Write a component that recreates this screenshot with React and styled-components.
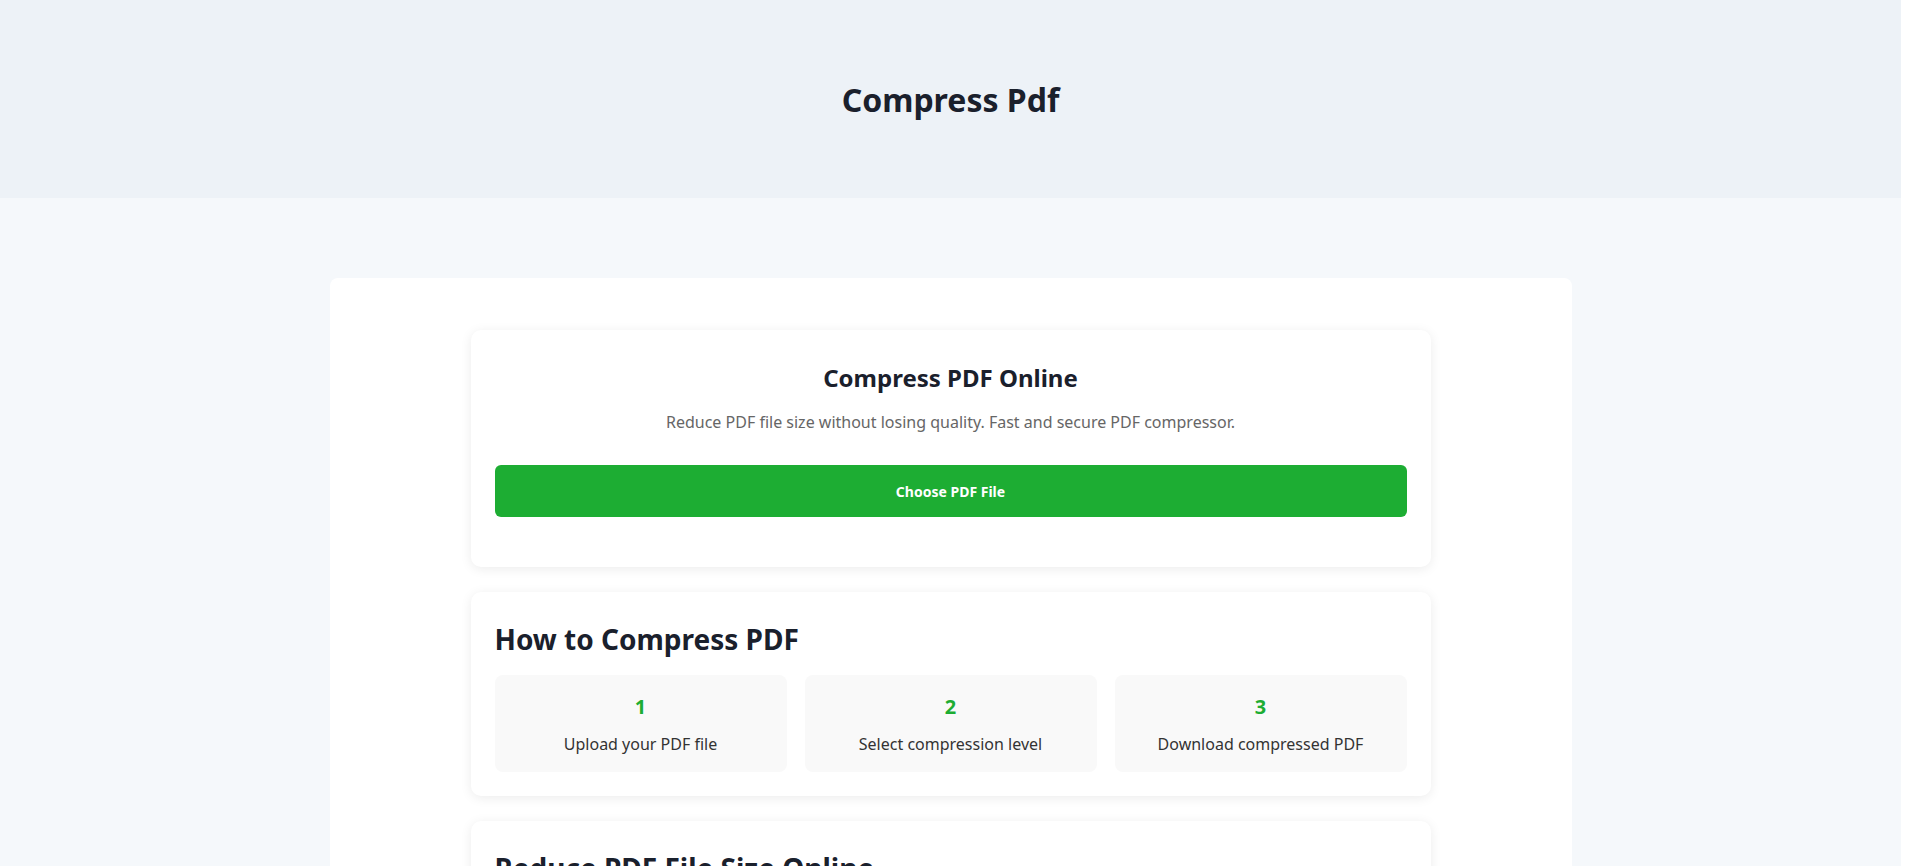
import React from 'react';
import styled, { createGlobalStyle } from 'styled-components';

const GlobalStyle = createGlobalStyle`
  * {
    box-sizing: border-box;
  }
  html {
    background: #ffffff;
  }
  body {
    margin: 0 9px 0 0;
    background: #f5f8fb;
    font-family: 'Noto Sans', 'Open Sans', sans-serif;
    color: #1a202c;
  }
`;

const steps = [
  { id: 1, text: 'Upload your PDF file' },
  { id: 2, text: 'Select compression level' },
  { id: 3, text: 'Download compressed PDF' },
];

const App = () => {
  return (
    <>
      <GlobalStyle />
      <Header>
        <PageTitle>Compress Pdf</PageTitle>
      </Header>

      <Main>
        <Container>
          <Card centered>
            <ToolTitle>Compress PDF Online</ToolTitle>
            <ToolText>
              Reduce PDF file size without losing quality. Fast and secure PDF
              compressor.
            </ToolText>
            <UploadButton type='button'>Choose PDF File</UploadButton>
          </Card>

          <Card>
            <SectionTitle>How to Compress PDF</SectionTitle>
            <StepGrid>
              {steps.map((step) => (
                <StepBox key={step.id}>
                  <StepNumber>{step.id}</StepNumber>
                  <StepText>{step.text}</StepText>
                </StepBox>
              ))}
            </StepGrid>
          </Card>

          <Card>
            <SectionTitle>Reduce PDF File Size Online</SectionTitle>
            <Paragraph>
              Large PDF files are hard to share by email and slow to upload.
              Our compressor shrinks your documents while keeping text sharp
              and images clear, so they are ready to send in seconds.
            </Paragraph>
            <Paragraph>
              Everything runs in your browser. Your files are never stored and
              are removed as soon as the compression is finished.
            </Paragraph>
          </Card>

          <Card>
            <SectionTitle>Why Use Our PDF Compressor</SectionTitle>
            <FeatureList>
              <li>Free to use with no sign-up required</li>
              <li>Keeps the original layout and fonts</li>
              <li>Works on Windows, Mac, Linux and mobile</li>
              <li>Secure processing with automatic file deletion</li>
            </FeatureList>
          </Card>

          <Card>
            <SectionTitle>Frequently Asked Questions</SectionTitle>
            <Question>Is it safe to compress PDF files online?</Question>
            <Paragraph>
              Yes. Files are processed securely and deleted right after you
              download the result.
            </Paragraph>
            <Question>Will compression reduce the quality?</Question>
            <Paragraph>
              The compressor balances size and quality, so most documents look
              the same as the original.
            </Paragraph>
          </Card>
        </Container>
      </Main>
    </>
  );
};

const Header = styled.header`
  background: #edf2f7;
  height: 198px;
  display: flex;
  align-items: center;
  justify-content: center;
`;

const PageTitle = styled.h1`
  margin: 0;
  font-size: 32px;
  font-weight: 700;
  color: #1a202c;
`;

const Main = styled.main`
  padding: 80px 0 90px;
`;

const Container = styled.div`
  width: 1242px;
  margin: 0 auto;
  background: #ffffff;
  border-radius: 8px;
  padding: 52px 0 40px;
  display: flex;
  flex-direction: column;
  align-items: center;
  gap: 25px;
`;

const Card = styled.section`
  width: 960px;
  background: #ffffff;
  border-radius: 10px;
  box-shadow: 0 2px 12px rgba(0, 0, 0, 0.08);
  padding: 24px;
  text-align: ${(props) => (props.centered ? 'center' : 'left')};
`;

const ToolTitle = styled.h2`
  margin: 8px 0 0;
  font-size: 24px;
  line-height: 32px;
  font-weight: 700;
  color: #1a202c;
`;

const ToolText = styled.p`
  margin: 16px 0 31px;
  font-size: 16px;
  line-height: 24px;
  color: #666666;
`;

const UploadButton = styled.button`
  display: block;
  width: 100%;
  height: 52px;
  margin-bottom: 26px;
  border: none;
  border-radius: 6px;
  background: #1dad33;
  color: #ffffff;
  font-family: inherit;
  font-size: 14px;
  font-weight: 700;
  cursor: pointer;
`;

const SectionTitle = styled.h3`
  margin: 6px 0 19px;
  font-size: 28px;
  line-height: 34px;
  font-weight: 700;
  color: #1a202c;
`;

const StepGrid = styled.div`
  display: grid;
  grid-template-columns: repeat(3, 1fr);
  gap: 18px;
`;

const StepBox = styled.div`
  background: #f9f9f9;
  border-radius: 8px;
  padding: 20px 16px 16px;
  text-align: center;
`;

const StepNumber = styled.div`
  font-size: 20px;
  line-height: 24px;
  font-weight: 700;
  color: #1dad33;
`;

const StepText = styled.p`
  margin: 13px 0 0;
  font-size: 16px;
  line-height: 24px;
  color: #333333;
`;

const Paragraph = styled.p`
  margin: 0 0 14px;
  font-size: 16px;
  line-height: 26px;
  color: #444444;
`;

const FeatureList = styled.ul`
  margin: 0;
  padding-left: 22px;
  font-size: 16px;
  line-height: 30px;
  color: #444444;
`;

const Question = styled.h4`
  margin: 12px 0 6px;
  font-size: 18px;
  font-weight: 700;
  color: #1a202c;
`;

export default App;
